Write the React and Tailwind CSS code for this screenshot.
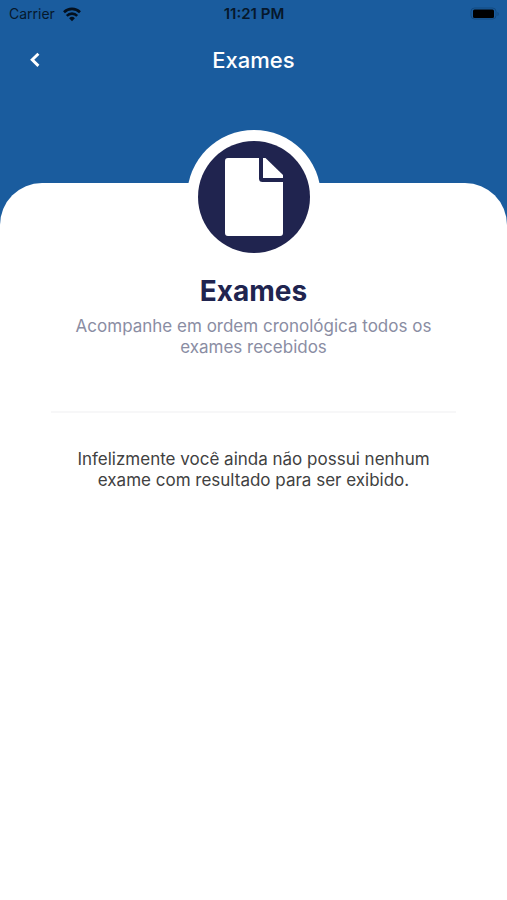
function StatusBar() {
  return (
    <div className="grid h-7 grid-cols-3 items-center pl-[9px] pr-2 text-sm text-[#06182c]">
      <div className="flex items-center gap-2">
        <span>Carrier</span>
        <svg className="h-[15px] w-[18px]" viewBox="0 0 18 15" fill="none" stroke="#04101e" strokeWidth="2.6" aria-hidden="true">
          <path d="M1 5.200a11.400 11.400 0 0 1 16 0" />
          <path d="M3.800 8.800a7.400 7.400 0 0 1 10.400 0" />
          <path d="M9 14.200 6.100 11.200a4.200 4.200 0 0 1 5.800 0z" fill="#04101e" stroke="none" />
        </svg>
      </div>
      <span className="text-center text-[15px] font-semibold">11:21 PM</span>
      <svg className="h-[14px] w-[30px] justify-self-end" viewBox="0 0 30 14" aria-hidden="true">
        <rect x="2" y="1" width="25" height="11" rx="3.5" fill="none" stroke="#134a80" />
        <rect x="4" y="2.500" width="21" height="8.500" rx="1.5" fill="#000" />
        <path d="M28.500 5v4c1.600-.6 1.600-3.400 0-4z" fill="#134a80" />
      </svg>
    </div>
  );
}

export default function App() {
  return (
    <div className="flex min-h-screen flex-col bg-[#1a5c9e] font-['Inter','Liberation_Sans',sans-serif]">
      <StatusBar />
      <header className="grid h-16 grid-cols-[1fr_auto_1fr] items-center px-4">
        <button type="button" aria-label="Voltar" className="flex size-10 items-center justify-center text-white">
          <svg className="h-4 w-3" viewBox="0 0 12 16" fill="none" stroke="currentColor" strokeWidth="2.9" aria-hidden="true">
            <path d="M8.400 1.700 2.200 7.800l6.200 6.100" />
          </svg>
        </button>
        <h1 className="text-[22px] font-medium leading-7 text-white">Exames</h1>
      </header>
      <main className="mt-[91px] flex flex-1 flex-col items-center rounded-t-[42px] bg-white px-[51px] text-center">
        <div className="-mt-[53px] flex size-[134px] items-center justify-center rounded-full bg-white">
          <div className="flex size-28 items-center justify-center rounded-full bg-[#20244f]">
            <svg className="h-[78px] w-[58px]" viewBox="0 0 58 78" fill="#fff" aria-hidden="true">
              <path d="M3 0h31v20.500a3.500 3.500 0 0 0 3.500 3.500H58v51a3 3 0 0 1-3 3H3a3 3 0 0 1-3-3V3a3 3 0 0 1 3-3z" />
              <path d="M38 0h2.500L58 17v3H38z" />
            </svg>
          </div>
        </div>
        <h2 className="mt-2 text-[28px] font-bold leading-[38px] text-[#20244f]">Exames</h2>
        <p className="mt-1.5 w-full px-5 text-[17px] leading-[21px] text-[#8a8da3]">
          Acompanhe em ordem cronológica todos os exames recebidos
        </p>
        <hr className="mt-[53px] w-full border-t-2 border-[#f7f7f8]" />
        <p className="mt-9 w-full px-5 text-[17px] leading-[21px] text-[#414141]">
          Infelizmente você ainda não possui nenhum exame com resultado para ser exibido.
        </p>
      </main>
    </div>
  );
}
